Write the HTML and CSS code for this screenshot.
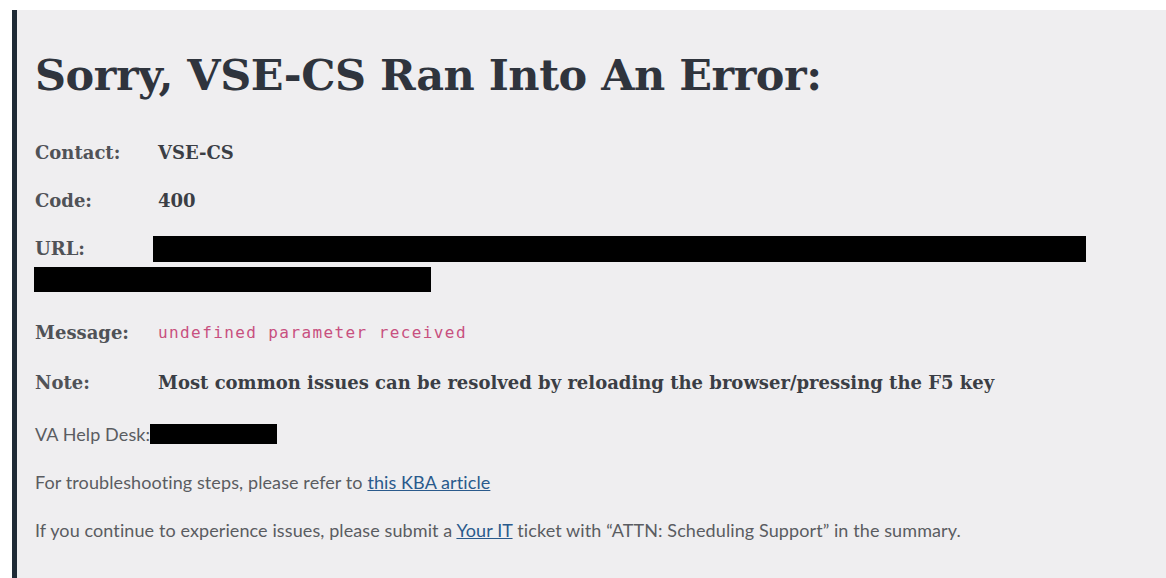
FILE: index.html
```html
<!DOCTYPE html>
<html lang="en">
<head>
<meta charset="utf-8">
<title>Error</title>
<link rel="stylesheet" href="styles.css">
</head>
<body>
<main class="panel">
  <h1 class="title">Sorry, VSE-CS Ran Into An Error:</h1>
  <dl class="details">
    <dt>Contact:</dt><dd>VSE-CS</dd>
    <dt>Code:</dt><dd>400</dd>
    <dt>URL:</dt><dd><span class="redact redact-url"></span></dd>
  </dl>
  <span class="redact redact-url2"></span>
  <dl class="details details-lower">
    <dt>Message:</dt><dd class="message">undefined parameter received</dd>
    <dt>Note:</dt><dd>Most common issues can be resolved by reloading the browser/pressing the F5 key</dd>
  </dl>
  <p class="small helpdesk">VA Help Desk:<span class="redact redact-phone"></span></p>
  <p class="small">For troubleshooting steps, please refer to <a href="#">this KBA article</a></p>
  <p class="small">If you continue to experience issues, please submit a <a href="#">Your IT</a> ticket with “ATTN: Scheduling Support” in the summary.</p>
</main>
</body>
</html>
```
FILE: styles.css
```css
html, body {
  margin: 0;
  background: #ffffff;
}

.panel {
  margin: 10px 0 0 12px;
  min-height: 568px;
  box-sizing: border-box;
  border-left: 5px solid #1f2a36;
  background: #efeef0;
  padding: 39px 20px 0 18px;
  color: #3a3d44;
}

.title {
  margin: 0 0 39px;
  font-family: "DejaVu Serif", serif;
  font-weight: bold;
  font-size: 43px;
  line-height: 52px;
  color: #2f343d;
  letter-spacing: -0.5px;
}

.details {
  display: grid;
  grid-template-columns: 123px 1fr;
  row-gap: 22px;
  margin: 0;
  font-family: "DejaVu Serif", serif;
  font-weight: bold;
  font-size: 18px;
  line-height: 26px;
}

.details dt {
  color: #505257;
}

.details dd {
  margin: 0;
  color: #3b3e45;
}

.redact {
  display: inline-block;
  background: #000;
  vertical-align: top;
}

.redact-url {
  width: 933px;
  height: 26px;
  margin-left: -5px;
}

.redact-url2 {
  display: block;
  width: 397px;
  height: 25px;
  margin: 5px 0 0 -1px;
}

.details-lower {
  margin-top: 28px;
  row-gap: 24px;
}

.details .message {
  font-family: "DejaVu Sans Mono", monospace;
  font-weight: normal;
  font-size: 16px;
  letter-spacing: 1.4px;
  color: #c8507f;
}

.small {
  margin: 24px 0 0;
  font-family: Lato, sans-serif;
  font-size: 18px;
  line-height: 24px;
  letter-spacing: 0.1px;
  color: #5a5c61;
}

.helpdesk {
  margin-top: 26px;
  display: flex;
  align-items: center;
}

.redact-phone {
  width: 127px;
  height: 20px;
}

.small a {
  color: #2a5a8c;
  text-decoration: underline;
}
```
